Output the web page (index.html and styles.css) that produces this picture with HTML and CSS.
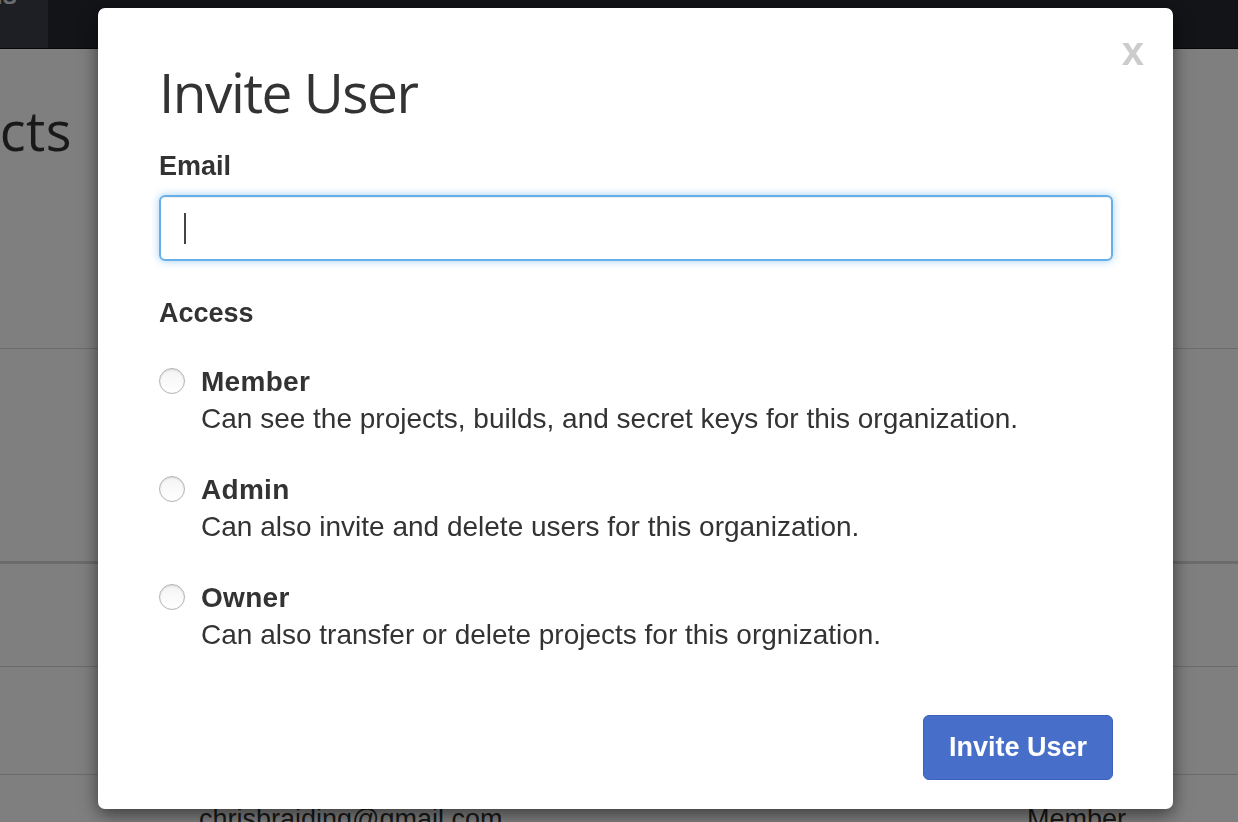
FILE: index.html
```html
<!DOCTYPE html>
<html>
<head>
<meta charset="utf-8">
<title>Invite User</title>
<link rel="stylesheet" href="styles.css">
</head>
<body>
<div class="page">
  <nav class="topnav">
    <div class="nav-tab"><span class="nav-tab-text">Builds</span></div>
  </nav>
  <main class="content">
    <h1 class="page-title"><span>Projects</span></h1>
    <div class="row row-first"></div>
    <div class="row row-thick"></div>
    <div class="row row-mid"></div>
    <div class="row row-user">
      <span class="user-email">chrisbraiding@gmail.com</span>
      <span class="user-role">Member</span>
    </div>
  </main>
</div>
<div class="backdrop"></div>
<div class="modal">
  <div class="close">x</div>
  <h2 class="modal-title">Invite User</h2>
  <div class="field-label">Email</div>
  <div class="input"><span class="caret"></span></div>
  <div class="field-label access-label">Access</div>
  <div class="options">
    <div class="option">
      <span class="radio"></span>
      <div class="option-text">
        <div class="option-name">Member</div>
        <div class="option-desc">Can see the projects, builds, and secret keys for this organization.</div>
      </div>
    </div>
    <div class="option">
      <span class="radio"></span>
      <div class="option-text">
        <div class="option-name">Admin</div>
        <div class="option-desc">Can also invite and delete users for this organization.</div>
      </div>
    </div>
    <div class="option">
      <span class="radio"></span>
      <div class="option-text">
        <div class="option-name">Owner</div>
        <div class="option-desc">Can also transfer or delete projects for this orgnization.</div>
      </div>
    </div>
  </div>
  <div class="actions">
    <button class="btn-primary">Invite User</button>
  </div>
</div>
</body>
</html>
```
FILE: styles.css
```css
html, body {
  margin: 0;
  padding: 0;
  height: 100%;
  overflow: hidden;
}
body {
  background: #ffffff;
  font-family: "Liberation Sans", Arial, sans-serif;
  color: #333333;
}
.page {
  height: 822px;
  overflow: hidden;
}
.topnav {
  height: 48px;
  background: #262930;
  border-bottom: 1px solid #0e0f12;
  display: flex;
}
.nav-tab {
  width: 48px;
  background: #3b3f48;
  overflow: hidden;
  display: flex;
  justify-content: flex-end;
}
.nav-tab-text {
  color: #d8dade;
  font-size: 26px;
  font-weight: bold;
  line-height: 26px;
  margin-top: -18px;
  margin-right: 31px;
  white-space: nowrap;
}
.content {
  padding-top: 49px;
}
.page-title {
  margin: 0;
  width: 72px;
  overflow: hidden;
  display: flex;
  justify-content: flex-end;
  white-space: nowrap;
  font-family: "Open Sans", sans-serif;
  font-weight: 400;
  font-size: 54px;
  letter-spacing: 0.5px;
  line-height: 64px;
  color: #333333;
  height: 250px;
}
.page-title span {
  flex: none;
}
.row {
  border-top: 1px solid #d6d6d6;
  height: 212px;
}
.row-thick {
  border-top: 3px solid #d6d6d6;
  height: 102px;
}
.row-mid {
  height: 107px;
}
.row-user {
  height: 60px;
  position: relative;
  font-size: 27px;
  line-height: 27px;
  color: #333;
}
.user-email {
  position: absolute;
  left: 199px;
  top: 31px;
}
.user-role {
  position: absolute;
  left: 1027px;
  top: 31px;
}
.backdrop {
  position: fixed;
  inset: 0;
  background: rgba(0, 0, 0, 0.5);
}
.modal {
  position: absolute;
  left: 98px;
  top: 8px;
  width: 1075px;
  height: 801px;
  box-sizing: border-box;
  background: #ffffff;
  border-radius: 7px;
  box-shadow: 0 5px 18px rgba(0, 0, 0, 0.55);
  padding: 52px 60px 30px 61px;
}
.close {
  position: absolute;
  right: 29px;
  top: 23px;
  font-size: 40px;
  line-height: 40px;
  font-weight: bold;
  color: #cccccc;
}
.modal-title {
  margin: 0;
  font-family: "Open Sans", sans-serif;
  font-weight: 400;
  font-size: 55px;
  letter-spacing: -1.5px;
  line-height: 64px;
  color: #333333;
}
.field-label {
  margin-top: 24px;
  font-size: 27px;
  line-height: 37px;
  font-weight: bold;
  color: #333333;
}
.input {
  margin-top: 10px;
  height: 66px;
  box-sizing: border-box;
  border: 2px solid #66afe9;
  border-radius: 6px;
  box-shadow: inset 0 1px 1px rgba(0, 0, 0, 0.075), 0 0 8px rgba(102, 175, 233, 0.6);
  display: flex;
  align-items: center;
  padding-left: 23px;
}
.caret {
  width: 2px;
  height: 31px;
  background: #444444;
}
.field-label.access-label {
  margin-top: 34px;
}
.options {
  margin-top: 31px;
  display: flex;
  flex-direction: column;
  gap: 34px;
}
.option {
  display: flex;
  align-items: flex-start;
  gap: 16px;
}
.radio {
  flex: none;
  width: 26px;
  height: 26px;
  box-sizing: border-box;
  margin-top: 5px;
  border-radius: 50%;
  border: 1px solid #b4b4b4;
  background: linear-gradient(#f4f4f4, #ffffff);
  box-shadow: inset 0 1px 2px rgba(0, 0, 0, 0.12);
}
.option-name {
  font-size: 28px;
  line-height: 37px;
  font-weight: bold;
  letter-spacing: 0.3px;
  color: #333333;
}
.option-desc {
  font-size: 28px;
  line-height: 37px;
  color: #333333;
}
.actions {
  margin-top: 62px;
  display: flex;
  justify-content: flex-end;
}
.btn-primary {
  width: 190px;
  height: 65px;
  box-sizing: border-box;
  background: #476fca;
  border: 1px solid #3b63bd;
  border-radius: 6px;
  color: #ffffff;
  font-family: "Liberation Sans", Arial, sans-serif;
  font-size: 27px;
  font-weight: bold;
  padding: 0;
}
```
